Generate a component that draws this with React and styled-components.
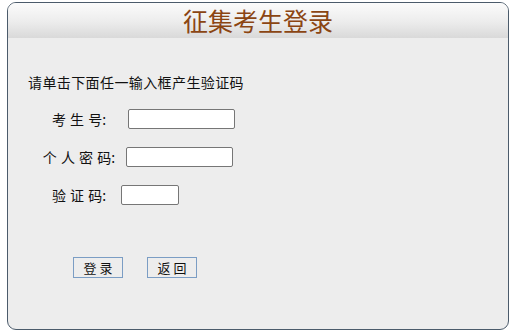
import React from "react";
import styled, { createGlobalStyle } from "styled-components";

const GlobalStyle = createGlobalStyle`
  body {
    margin: 0;
    background: #ffffff;
    font-family: "Noto Sans CJK SC", "Noto Sans", sans-serif;
  }
`;

const Panel = styled.div`
  box-sizing: border-box;
  margin: 2px 0 0 7px;
  width: 502px;
  height: 328px;
  border: 1px solid #4b5b6b;
  border-radius: 9px;
  background: #ededed;
  overflow: hidden;
`;

const Header = styled.div`
  height: 35px;
  background: linear-gradient(to bottom, #fbfbfb 0%, #ececec 55%, #d9d9d9 100%);
  display: flex;
  align-items: center;
  justify-content: center;
`;

const Title = styled.h1`
  margin: 0;
  font-size: 25px;
  font-weight: normal;
  color: #8b4513;
  line-height: 1;
`;

const Body = styled.div`
  padding: 36px 0 0 20px;
`;

const Hint = styled.p`
  margin: 0;
  font-size: 14px;
  line-height: 16px;
  letter-spacing: 0.4px;
  color: #111;
`;

const Form = styled.div`
  display: flex;
  flex-direction: column;
  gap: 18px;
  margin-top: 19px;
`;

const Row = styled.div`
  display: flex;
  align-items: center;
  height: 20px;
`;

const Label = styled.label`
  width: 102px;
  text-align: center;
  font-size: 14px;
  color: #111;
  word-spacing: 1px;
  white-space: pre;
`;

const Field = styled.input`
  box-sizing: border-box;
  margin-left: ${({ $offset }) => $offset}px;
  width: ${({ $width }) => $width}px;
  height: 20px;
  border: 1px solid #767676;
  border-radius: 2px;
  background: #fff;
  padding: 0 3px;
`;

const Actions = styled.div`
  display: flex;
  gap: 24px;
  margin: 52px 0 0 45px;
`;

const Button = styled.button`
  box-sizing: border-box;
  width: 50px;
  height: 21px;
  border: 1px solid #7b9dc4;
  background: #ededed;
  font-family: inherit;
  font-size: 13px;
  color: #111;
  padding: 0;
  line-height: 1;
`;

const fields = [
  { label: "考 生 号:", offset: -2, width: 107 },
  { label: "个 人 密 码:", offset: -4, width: 107 },
  { label: "验 证 码:", offset: -9, width: 58 },
];

export default function App() {
  return (
    <>
      <GlobalStyle />
      <Panel>
        <Header>
          <Title>征集考生登录</Title>
        </Header>
        <Body>
          <Hint>请单击下面任一输入框产生验证码</Hint>
          <Form>
            {fields.map((f) => (
              <Row key={f.label}>
                <Label>{f.label}</Label>
                <Field $offset={f.offset} $width={f.width} />
              </Row>
            ))}
          </Form>
          <Actions>
            <Button>登 录</Button>
            <Button>返 回</Button>
          </Actions>
        </Body>
      </Panel>
    </>
  );
}
